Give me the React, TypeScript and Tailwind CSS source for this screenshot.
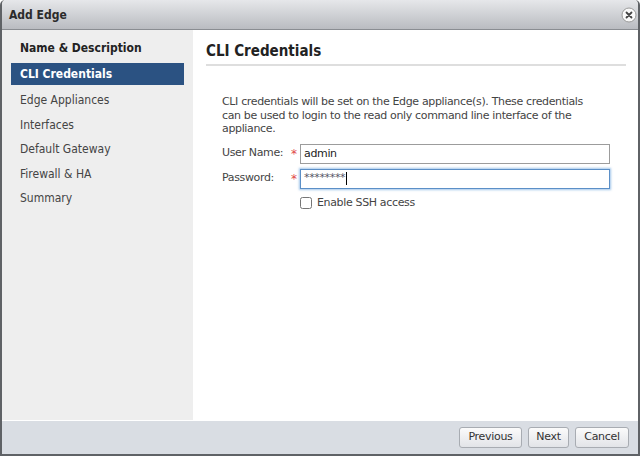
import { useState } from 'react';

const steps = ['Name & Description', 'CLI Credentials', 'Edge Appliances', 'Interfaces', 'Default Gateway', 'Firewall & HA', 'Summary'];

const buttons = [
  { label: 'Previous', width: 'w-[63px]' },
  { label: 'Next', width: 'w-[41px]' },
  { label: 'Cancel', width: 'w-[54px]' },
];

function CloseIcon() {
  return (
    <svg width="16" height="16" viewBox="0 0 16 16">
      <circle cx="8" cy="8" r="7" fill="#fafafa" stroke="#9a9a9a" strokeWidth="1" />
      <path d="M5.5 5.5 L10.5 10.5 M10.5 5.5 L5.5 10.5" stroke="#444" strokeWidth="1.8" strokeLinecap="round" />
    </svg>
  );
}

export default function App() {
  const [user, setUser] = useState('admin');
  const [ssh, setSsh] = useState(false);
  const current = 1;

  return (
    <div className="flex h-[456px] w-[640px] flex-col overflow-hidden rounded-t-[5px] border-2 border-t-0 border-[#5f6266] bg-white font-['DejaVu_Sans',sans-serif] text-[11px] text-[#333]">
      <div className="flex h-[30px] shrink-0 items-center justify-between border-b border-[#8a8d92] bg-gradient-to-b from-[#e6e7ea] to-[#babcc1] pl-[7px] pr-[1px]">
        <span className="font-['DejaVu_Sans_Condensed',sans-serif] text-[12px] font-bold text-[#2b2b2b]">Add Edge</span>
        <CloseIcon />
      </div>

      <div className="flex min-h-0 flex-1">
        <aside className="w-[191px] shrink-0 bg-[#eeeeee] pt-[7px] font-['DejaVu_Sans_Condensed',sans-serif]">
          {steps.map((s, i) =>
            i === current ? (
              <div key={s} className="mx-[9px] mb-[3px] flex h-[22px] items-center bg-[#2b5282] pl-[9px] text-[12px] font-bold text-white">
                {s}
              </div>
            ) : (
              <div
                key={s}
                className={`flex items-center pl-[18px] text-[12px] ${i === 0 ? 'mb-[4px] h-[22px] font-bold text-[#222]' : 'h-[24.5px] text-[#444]'}`}
              >
                {s}
              </div>
            )
          )}
        </aside>

        <main className="flex-1 pl-[13px] pr-[12px] pt-[12px]">
          <h2 className="border-b-2 border-[#dedede] pb-[4px] font-['DejaVu_Sans_Condensed',sans-serif] text-[15px] font-bold leading-[18px] text-[#222]">
            CLI Credentials
          </h2>
          <div className="pl-[16px] pt-[29px] tracking-[-0.35px]">
            <p className="w-[380px] leading-[13.5px] text-[#444]">
              CLI credentials will be set on the Edge appliance(s). These credentials can be used to login to the read only command line interface of the appliance.
            </p>
            <div className="mt-[8px] flex h-[20px] items-center">
              <label className="w-[69px] text-[#444]">User Name:</label>
              <span className="w-[9px] text-[12px] text-[#e04848]">*</span>
              <input
                value={user}
                onChange={(e) => setUser(e.target.value)}
                className="h-[20px] w-[310px] border border-[#9c9c9c] px-[3px] text-[11px] text-[#222] outline-none"
              />
            </div>
            <div className="mt-[5px] flex h-[20px] items-center">
              <label className="w-[69px] text-[#444]">Password:</label>
              <span className="w-[9px] text-[12px] text-[#e04848]">*</span>
              <div className="flex h-[20px] w-[310px] items-center border border-[#5b8fc7] px-[3px] shadow-[0_0_2px_1px_rgba(100,160,220,0.6)]">
                <span className="text-[11px] text-[#556]">********</span>
                <span className="ml-[1px] h-[13px] w-[1px] bg-black" />
              </div>
            </div>
            <label className="ml-[78px] mt-[6px] flex items-center gap-[5px] text-[#444]">
              <input type="checkbox" checked={ssh} onChange={(e) => setSsh(e.target.checked)} className="h-[12px] w-[12px] accent-[#2b5282]" />
              Enable SSH access
            </label>
          </div>
        </main>
      </div>

      <div className="flex h-[34px] shrink-0 items-center justify-end gap-[6px] border-t border-white bg-[#d9dde3] pr-[9px]">
        {buttons.map((b) => (
          <button
            key={b.label}
            className={`h-[21px] ${b.width} rounded-[3px] border border-[#a8acb2] bg-gradient-to-b from-[#fbfbfb] to-[#e2e4e8] text-[11px] tracking-[-0.3px] text-[#333]`}
          >
            {b.label}
          </button>
        ))}
      </div>
    </div>
  );
}
